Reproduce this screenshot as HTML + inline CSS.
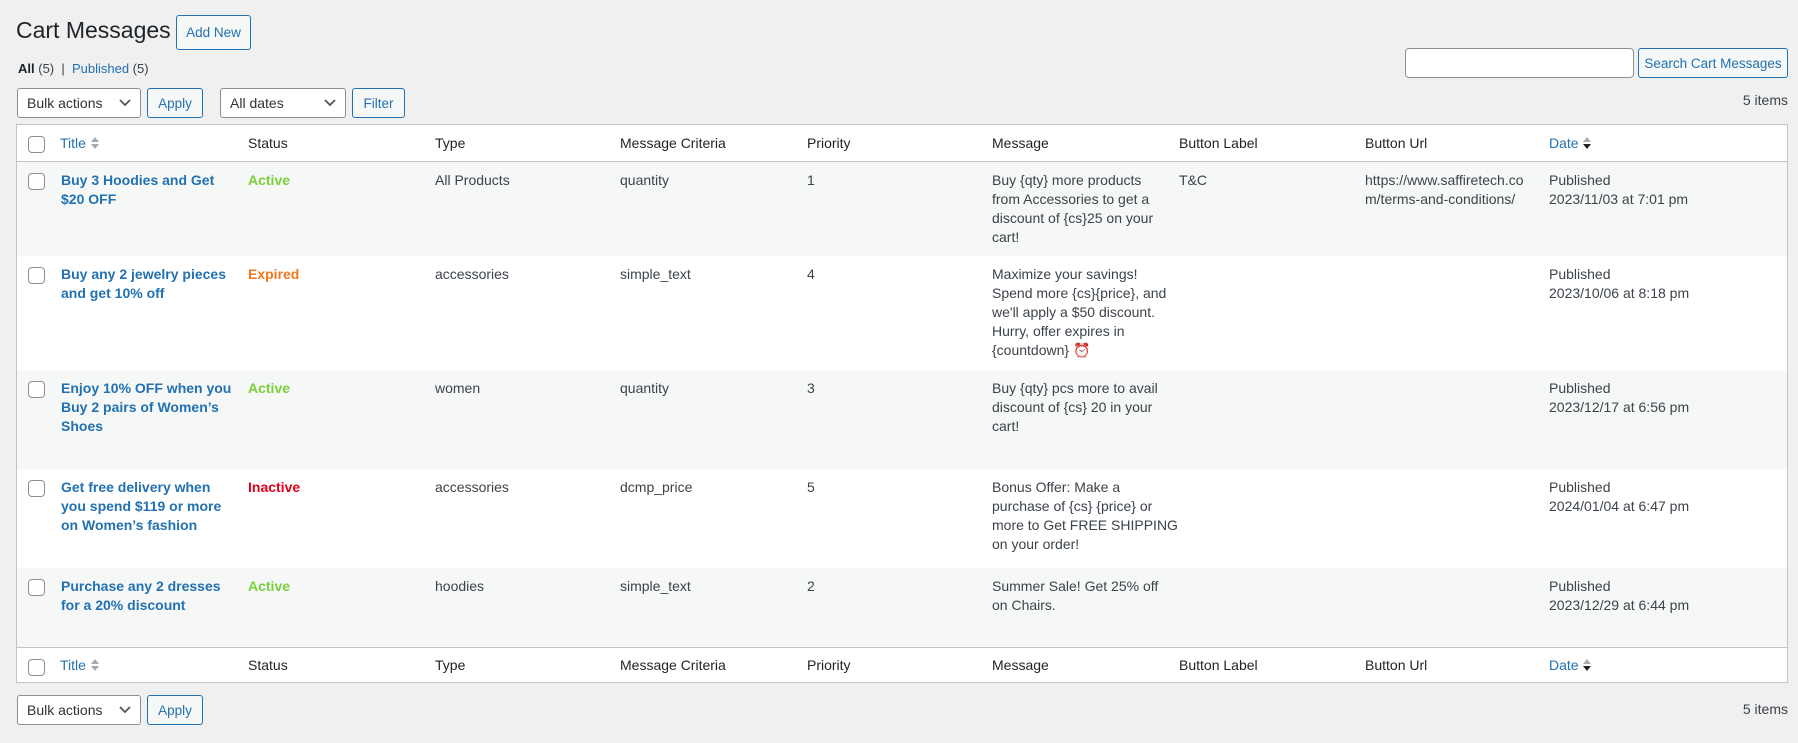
<!DOCTYPE html>
<html><head><meta charset="utf-8">
<style>
*{box-sizing:border-box}
body{margin:0;background:#f0f0f1;font-family:"Liberation Sans",sans-serif;font-size:14px;color:#3c434a;width:1798px;height:743px;position:relative;overflow:hidden}
.a{position:absolute}
h1{position:absolute;left:16px;top:14px;margin:0;font-weight:400;font-size:23px;color:#1d2327;line-height:32px}
.btn{position:absolute;border:1px solid #2271b1;color:#2271b1;background:#f6f7f7;border-radius:3px;font-size:13.5px;display:flex;align-items:center;justify-content:center}
.sel{position:absolute;border:1px solid #8c8f94;background:#fff;border-radius:3px;font-size:14px;color:#2c3338;padding-left:9px;display:flex;align-items:center}
.sel svg{position:absolute;right:9px;top:10px}
.tbl{position:absolute;left:16px;top:124px;width:1772px;height:559px;border:1px solid #c3c4c7;background:#fff}
.row{position:absolute;left:0;width:1770px}
.c{position:absolute;white-space:nowrap;line-height:19px}
.cb{position:absolute;left:11px;width:17px;height:17px;border:1px solid #8c8f94;border-radius:4px;background:#fff}
.lnk{color:#2271b1}
.t{font-weight:700;color:#2271b1}
.hd{color:#1d2327}
</style></head><body>
<h1>Cart Messages</h1>
<div class="btn" style="left:176px;top:15px;width:75px;height:35px">Add New</div>
<div class="a" style="left:18px;top:61px;font-size:13px"><b style="color:#1d2327">All</b> (5) &nbsp;|&nbsp; <span class="lnk">Published</span> (5)</div>
<div class="a" style="left:1405px;top:48px;width:229px;height:30px;border:1px solid #8c8f94;border-radius:4px;background:#fff"></div>
<div class="btn" style="left:1638px;top:48px;width:150px;height:30px">Search Cart Messages</div>
<div class="sel" style="left:17px;top:88px;width:124px;height:30px">Bulk actions<svg width="12" height="8"><path d="M1 1l5 5 5-5" stroke="#50575e" stroke-width="1.8" fill="none"/></svg></div>
<div class="btn" style="left:147px;top:88px;width:56px;height:30px">Apply</div>
<div class="sel" style="left:220px;top:88px;width:126px;height:30px">All dates<svg width="12" height="8"><path d="M1 1l5 5 5-5" stroke="#50575e" stroke-width="1.8" fill="none"/></svg></div>
<div class="btn" style="left:352px;top:88px;width:53px;height:30px">Filter</div>
<div class="a" style="right:10px;top:92px;font-size:14px">5 items</div>

<div class="tbl">
 <div class="row" style="top:0;height:37px;border-bottom:1px solid #c3c4c7">
  <div class="cb" style="top:11px"></div>
  <div class="c lnk" style="left:43px;top:9px">Title <svg width="10" height="16" style="vertical-align:-3px"><path d="M1 7l4-5 4 5z M1 9l4 5 4-5z" fill="#a7aaad"/></svg></div>
  <div class="c hd" style="left:231px;top:9px">Status</div>
  <div class="c hd" style="left:418px;top:9px">Type</div>
  <div class="c hd" style="left:603px;top:9px">Message Criteria</div>
  <div class="c hd" style="left:790px;top:9px">Priority</div>
  <div class="c hd" style="left:975px;top:9px">Message</div>
  <div class="c hd" style="left:1162px;top:9px">Button Label</div>
  <div class="c hd" style="left:1348px;top:9px">Button Url</div>
  <div class="c lnk" style="left:1532px;top:9px">Date <svg width="10" height="16" style="vertical-align:-3px"><path d="M1 7l4-5 4 5z" fill="#a7aaad"/><path d="M1 9l4 5 4-5z" fill="#1d2327"/></svg></div>
 </div>
 <div class="row" style="top:37px;height:94px;background:#f6f7f7">
  <div class="cb" style="top:11px"></div>
  <div class="c t" style="left:44px;top:9px">Buy 3 Hoodies and Get<br>$20 OFF</div>
  <div class="c" style="left:231px;top:9px;color:#7ad03a;font-weight:700">Active</div>
  <div class="c" style="left:418px;top:9px">All Products</div>
  <div class="c" style="left:603px;top:9px">quantity</div>
  <div class="c" style="left:790px;top:9px">1</div>
  <div class="c" style="left:975px;top:9px">Buy {qty} more products<br>from Accessories to get a<br>discount of {cs}25 on your<br>cart!</div>
  <div class="c" style="left:1162px;top:9px">T&amp;C</div>
  <div class="c" style="left:1348px;top:9px">https://www.saffiretech.co<br>m/terms-and-conditions/</div>
  <div class="c" style="left:1532px;top:9px">Published<br>2023/11/03 at 7:01 pm</div>
 </div>
 <div class="row" style="top:131px;height:114px">
  <div class="cb" style="top:11px"></div>
  <div class="c t" style="left:44px;top:9px">Buy any 2 jewelry pieces<br>and get 10% off</div>
  <div class="c" style="left:231px;top:9px;color:#f0791d;font-weight:700">Expired</div>
  <div class="c" style="left:418px;top:9px">accessories</div>
  <div class="c" style="left:603px;top:9px">simple_text</div>
  <div class="c" style="left:790px;top:9px">4</div>
  <div class="c" style="left:975px;top:9px">Maximize your savings!<br>Spend more {cs}{price}, and<br>we'll apply a $50 discount.<br>Hurry, offer expires in<br>{countdown} <span style="color:#e0442c">⏰</span></div>
  <div class="c" style="left:1532px;top:9px">Published<br>2023/10/06 at 8:18 pm</div>
 </div>
 <div class="row" style="top:245px;height:99px;background:#f6f7f7">
  <div class="cb" style="top:11px"></div>
  <div class="c t" style="left:44px;top:9px">Enjoy 10% OFF when you<br>Buy 2 pairs of Women’s<br>Shoes</div>
  <div class="c" style="left:231px;top:9px;color:#7ad03a;font-weight:700">Active</div>
  <div class="c" style="left:418px;top:9px">women</div>
  <div class="c" style="left:603px;top:9px">quantity</div>
  <div class="c" style="left:790px;top:9px">3</div>
  <div class="c" style="left:975px;top:9px">Buy {qty} pcs more to avail<br>discount of {cs} 20 in your<br>cart!</div>
  <div class="c" style="left:1532px;top:9px">Published<br>2023/12/17 at 6:56 pm</div>
 </div>
 <div class="row" style="top:344px;height:99px">
  <div class="cb" style="top:11px"></div>
  <div class="c t" style="left:44px;top:9px">Get free delivery when<br>you spend $119 or more<br>on Women’s fashion</div>
  <div class="c" style="left:231px;top:9px;color:#e2001a;font-weight:700">Inactive</div>
  <div class="c" style="left:418px;top:9px">accessories</div>
  <div class="c" style="left:603px;top:9px">dcmp_price</div>
  <div class="c" style="left:790px;top:9px">5</div>
  <div class="c" style="left:975px;top:9px">Bonus Offer: Make a<br>purchase of {cs} {price} or<br>more to Get FREE SHIPPING<br>on your order!</div>
  <div class="c" style="left:1532px;top:9px">Published<br>2024/01/04 at 6:47 pm</div>
 </div>
 <div class="row" style="top:443px;height:79px;background:#f6f7f7">
  <div class="cb" style="top:11px"></div>
  <div class="c t" style="left:44px;top:9px">Purchase any 2 dresses<br>for a 20% discount</div>
  <div class="c" style="left:231px;top:9px;color:#7ad03a;font-weight:700">Active</div>
  <div class="c" style="left:418px;top:9px">hoodies</div>
  <div class="c" style="left:603px;top:9px">simple_text</div>
  <div class="c" style="left:790px;top:9px">2</div>
  <div class="c" style="left:975px;top:9px">Summer Sale! Get 25% off<br>on Chairs.</div>
  <div class="c" style="left:1532px;top:9px">Published<br>2023/12/29 at 6:44 pm</div>
 </div>
 <div class="row" style="top:522px;height:36px;border-top:1px solid #c3c4c7">
  <div class="cb" style="top:11px"></div>
  <div class="c lnk" style="left:43px;top:8px">Title <svg width="10" height="16" style="vertical-align:-3px"><path d="M1 7l4-5 4 5z M1 9l4 5 4-5z" fill="#a7aaad"/></svg></div>
  <div class="c hd" style="left:231px;top:8px">Status</div>
  <div class="c hd" style="left:418px;top:8px">Type</div>
  <div class="c hd" style="left:603px;top:8px">Message Criteria</div>
  <div class="c hd" style="left:790px;top:8px">Priority</div>
  <div class="c hd" style="left:975px;top:8px">Message</div>
  <div class="c hd" style="left:1162px;top:8px">Button Label</div>
  <div class="c hd" style="left:1348px;top:8px">Button Url</div>
  <div class="c lnk" style="left:1532px;top:8px">Date <svg width="10" height="16" style="vertical-align:-3px"><path d="M1 7l4-5 4 5z" fill="#a7aaad"/><path d="M1 9l4 5 4-5z" fill="#1d2327"/></svg></div>
 </div>
</div>

<div class="sel" style="left:17px;top:695px;width:124px;height:30px">Bulk actions<svg width="12" height="8"><path d="M1 1l5 5 5-5" stroke="#50575e" stroke-width="1.8" fill="none"/></svg></div>
<div class="btn" style="left:147px;top:695px;width:56px;height:30px">Apply</div>
<div class="a" style="right:10px;top:701px;font-size:14px">5 items</div>
</body></html>
